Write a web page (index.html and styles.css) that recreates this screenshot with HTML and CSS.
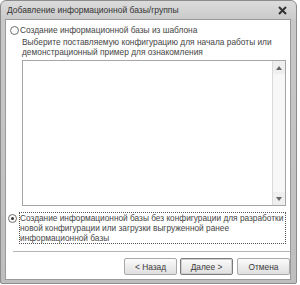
FILE: index.html
```html
<!DOCTYPE html>
<html>
<head>
<meta charset="utf-8">
<link rel="stylesheet" href="styles.css">
</head>
<body>
<div class="window">
  <div class="titlebar">
    <span class="title">Добавление информационной базы/группы</span>
    <span class="close">
      <svg width="9" height="9" viewBox="0 0 9 9"><path d="M1 1 L8 8 M8 1 L1 8" stroke="#333" stroke-width="2"/></svg>
    </span>
  </div>
  <div class="client">
    <label class="option first">
      <span class="radio"></span>
      <span class="label">Создание информационной базы из шаблона</span>
    </label>
    <div class="desc">Выберите поставляемую конфигурацию для начала работы или демонстрационный пример для ознакомления</div>
    <div class="listbox">
      <div class="list"></div>
      <div class="scrollbar">
        <div class="sbtn"><span class="tri up"></span></div>
        <div class="track"></div>
        <div class="sbtn"><span class="tri down"></span></div>
      </div>
    </div>
    <label class="option second">
      <span class="radio checked"></span>
      <span class="label focus">Создание информационной базы без конфигурации для разработки новой конфигурации или загрузки выгруженной ранее информационной базы</span>
    </label>
    <div class="separator"></div>
    <div class="buttons">
      <div class="group">
        <button class="btn">&lt; Назад</button>
        <button class="btn default">Далее &gt;</button>
      </div>
      <button class="btn">Отмена</button>
    </div>
  </div>
</div>
</body>
</html>
```
FILE: styles.css
```css
* { box-sizing: border-box; }
html, body { margin: 0; padding: 0; background: #ffffff; }
body { font-family: "Liberation Sans", Arial, sans-serif; font-size: 8.35px; color: #454545; }

.window {
  width: 297px;
  height: 284px;
  border: 1px solid #8c8c8c;
  border-radius: 6px 6px 2px 2px;
  background: linear-gradient(#dcdcdc, #c8c8c8 20px, #bebebe);
  padding: 0 5px 3px 4px;
  display: flex;
  flex-direction: column;
}
.titlebar {
  height: 19px;
  display: flex;
  align-items: center;
  justify-content: space-between;
  padding: 0 4px 0 2px;
}
.title { font-size: 8.5px; color: #333333; }
.close { display: flex; align-items: center; }

.client {
  flex: 1;
  background: #ffffff;
  border: 1px solid #9a9a9a;
  display: flex;
  flex-direction: column;
  padding: 4px 0 4px 4px;
}
.option { display: flex; align-items: flex-start; margin-right: 4px; }
.option.first { align-items: center; height: 12px; }
.radio {
  width: 9px; height: 9px;
  border: 1px solid #707070;
  border-radius: 50%;
  background: #fafafa;
  flex: none;
  margin-right: 1px;
  position: relative;
}
.radio.checked::after {
  content: "";
  position: absolute;
  left: 2px; top: 2px;
  width: 3px; height: 3px;
  border-radius: 50%;
  background: #333;
}
.label { line-height: 12px; }

.desc {
  margin: 1px 4px 0 12px;
  line-height: 10px;
}
.listbox {
  margin: 3px 4px 0 12px;
  height: 146px;
  border: 1px solid #a6a6a6;
  display: flex;
}
.list { flex: 1; }
.scrollbar {
  width: 13px;
  border-left: 1px solid #dadada;
  display: flex;
  flex-direction: column;
  background: #f7f7f7;
}
.sbtn {
  height: 13px;
  display: flex; align-items: center; justify-content: center;
  background: #efefef;
}
.track { flex: 1; }
.tri { width: 0; height: 0; border-left: 3px solid transparent; border-right: 3px solid transparent; }
.tri.up { border-bottom: 4px solid #666; }
.tri.down { border-top: 4px solid #666; }

.option.second { margin: 6px 4px 0 -2px; }
.option.second .radio { margin-top: 2px; margin-right: 2px; }
.option.second .label {
  font-size: 8.3px;
  line-height: 10px;
  border: 1px dotted #555;
  padding: 0;
  flex: 1;
}
.separator {
  margin: 7px 0 0 3px;
  height: 2px;
  border-top: 1px solid #b4b4b4;
  border-bottom: 1px solid #ffffff;
}
.buttons {
  display: flex;
  justify-content: flex-end;
  gap: 4px;
  margin-top: 5px;
}
.group { display: flex; gap: 3px; }
.btn {
  font-family: "Liberation Sans", Arial, sans-serif;
  font-size: 8.35px;
  color: #3a3a3a;
  width: 53px;
  height: 17px;
  padding: 0;
  border: 1px solid #a8a8a8;
  border-radius: 2px;
  background: linear-gradient(#fbfbfb, #ededed 50%, #e0e0e0);
}
.btn.default { border-color: #7a7a7a; box-shadow: inset 0 0 0 1px #d0d0d0; }
```
